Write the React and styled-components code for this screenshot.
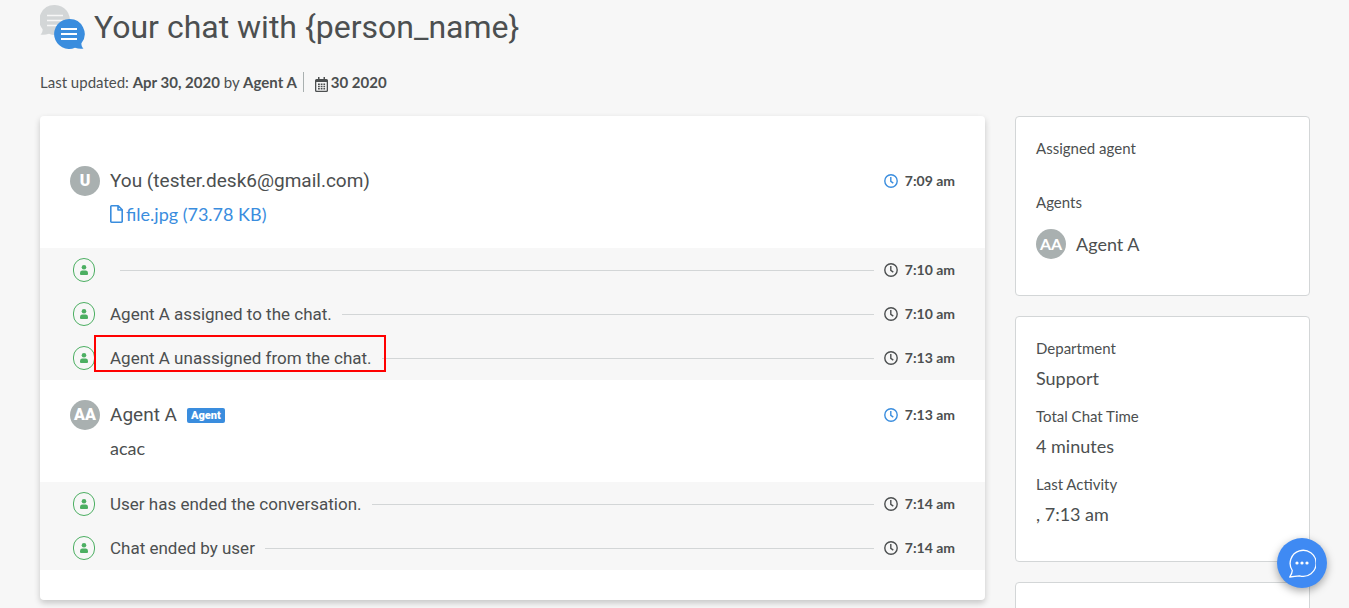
import React from "react";
import styled, { createGlobalStyle } from "styled-components";

const color = {
  page: "#f7f7f7",
  text: "#4c4f50",
  blue: "#3a8dde",
  grey: "#a9b0b0",
  line: "#d3d6d7",
  green: "#4caf62",
};
const heading = `Roboto, "Liberation Sans", sans-serif`;

const GlobalStyle = createGlobalStyle`
  *, *::before, *::after { box-sizing: border-box; }
  body {
    margin: 0;
    background: ${color.page};
    color: ${color.text};
    font-family: Lato, "Liberation Sans", sans-serif;
    font-size: 15px;
    line-height: 24px;
  }
  svg { display: block; flex: none; }
`;

const Page = styled.div`
  padding: 4px 39px 0 40px;
`;
const TitleRow = styled.header`
  display: flex;
  align-items: center;
  gap: 9px;
  height: 46px;
`;
const Title = styled.h1`
  margin: 0;
  font: 400 32px/40px ${heading};
`;
const Meta = styled.div`
  display: flex;
  align-items: center;
  height: 20px;
  margin: 22px 0 24px;
  line-height: 20px;
  white-space: pre-wrap;
`;
const MetaDate = styled.span`
  display: flex;
  align-items: flex-end;
  gap: 3px;
  margin-left: 6px;
  padding-left: 11px;
  border-left: 1px solid ${color.grey};
  font-weight: 700;
`;
const Columns = styled.div`
  display: grid;
  grid-template-columns: minmax(0, 1fr) 295px;
  gap: 30px;
  align-items: start;
`;
const Conversation = styled.main`
  padding: 30px 0;
  background: #fff;
  border-radius: 4px;
  box-shadow: 0 3px 6px rgba(0, 0, 0, 0.2);
`;
const MessageBox = styled.article`
  padding: 20px 30px 22px;
`;
const MessageHead = styled.div`
  display: flex;
  align-items: center;
  gap: 10px;
`;
const Author = styled.h2`
  margin: 0;
  font: 400 19px/30px ${heading};
`;
const Badge = styled.span`
  padding: 0 4px;
  border-radius: 2px;
  background: ${color.blue};
  color: #fff;
  font: 900 11px/15px ${heading};
`;
const MessageBody = styled.div`
  display: flex;
  margin: 6px 0 0 40px;
  font-size: 18px;
`;
const FileLink = styled.a`
  display: flex;
  align-items: center;
  gap: 3px;
  color: ${color.blue};
  text-decoration: none;
`;
const Avatar = styled.span`
  flex: none;
  width: 30px;
  height: 30px;
  border-radius: 50%;
  background: ${color.grey};
  color: #fff;
  font: ${(p) => (p.$heavy ? 900 : 700)} 16px/30px ${(p) => (p.$heavy ? heading : "Lato, sans-serif")};
  text-align: center;
`;
const TimeBox = styled.time`
  display: flex;
  align-items: center;
  gap: 7px;
  margin-left: auto;
  color: ${color.text};
  font-size: 14px;
  font-weight: 700;
  svg { color: ${(p) => (p.$accent ? color.blue : color.text)}; }
`;
const Events = styled.ul`
  margin: 0;
  padding: 0 30px;
  background: ${color.page};
  list-style: none;
`;
const EventRow = styled.li`
  display: flex;
  align-items: center;
  gap: 10px;
  height: 44px;
`;
const PersonRing = styled.span`
  display: grid;
  place-items: center;
  flex: none;
  width: 22px;
  height: 24px;
  margin: 0 5px 0 3px;
  border: 1px solid ${color.green};
  border-radius: 11px;
  color: ${color.green};
`;
const EventText = styled.span`
  position: relative;
  font: 400 17px/24px ${heading};
`;
const Highlight = styled.span`
  position: absolute;
  inset: -11px -14px -2px -16px;
  border: 2px solid #f00;
`;
const Rule = styled.span`
  flex: 1;
  height: 1px;
  background: ${color.line};
`;
const Side = styled.aside`
  display: grid;
  gap: 20px;
`;
const Panel = styled.section`
  min-height: ${(p) => p.$min || 0}px;
  padding: 19px 20px 21px;
  background: #fff;
  border: 1px solid ${color.line};
  border-radius: 4px;
`;
const Facts = styled.dl`
  margin: 0;
`;
const Label = styled.dt`
  margin: 0;
`;
const Value = styled.dd`
  display: flex;
  align-items: center;
  gap: 10px;
  min-height: 10px;
  margin: ${(p) => (p.$roomy ? "15px 0" : "6px 0 14px")};
  font-size: 18px;
`;
const ChatButton = styled.button`
  position: fixed;
  right: 22px;
  bottom: 20px;
  display: grid;
  place-items: center;
  width: 50px;
  height: 50px;
  padding: 0;
  border: 0;
  border-radius: 50%;
  background: #3f8af3;
  color: #fff;
  box-shadow: 0 3px 8px rgba(0, 0, 0, 0.35);
`;

const ChatLogo = () => (
  <svg width="45" height="46" viewBox="0 0 45 46" aria-hidden="true">
    <path fill="#d3d6d7" d="M15 1a15 15 0 1 1-6 28.800c-3 1-6 1.400-8.500.7 1.700-1.400 2.200-3 2.100-5.200A15 15 0 0 1 15 1z" />
    <path stroke="#f7f7f7" strokeWidth="1.600" d="M7 11.500h16M7 16.500h16M7 21.500h16" />
    <path fill="#3a8dde" d="M29 15a15 15 0 1 0 6 28.800c3 1 6 1.400 8.500.7-1.700-1.400-2.200-3-2.100-5.200A15 15 0 0 0 29 15z" />
    <path stroke="#fff" strokeWidth="1.800" d="M21 25h16M21 30h16M21 35h16" />
  </svg>
);
const CalendarIcon = () => (
  <svg width="13" height="15" viewBox="0 0 13 15" aria-hidden="true">
    <path fill="currentColor" fillRule="evenodd" d="M3 0h1.500v2h4V0H10v2h1.500A1.500 1.500 0 0 1 13 3.500v10a1.500 1.500 0 0 1-1.500 1.500h-10A1.500 1.500 0 0 1 0 13.500v-10A1.500 1.500 0 0 1 1.500 2H3zM1.300 5v8.200q0 .5.500.5h9.400q.5 0 .5-.5V5z" />
    <path stroke="currentColor" strokeWidth="1.500" strokeDasharray="1.800 .9" d="M3 7.300h7.100M3 9.500h7.100M3 11.700h7.100" />
  </svg>
);
const FileIcon = () => (
  <svg width="13" height="18" viewBox="0 0 13 18" fill="none" stroke="currentColor" strokeWidth="1.600" strokeLinejoin="round" aria-hidden="true">
    <path d="M1.500.8h6.700l4 4v11.700a.7.7 0 0 1-.7.7h-10a.7.7 0 0 1-.7-.7v-15a.7.7 0 0 1 .7-.7zM8 .8V5h4.200" />
  </svg>
);
const ClockIcon = () => (
  <svg width="14" height="14" viewBox="0 0 14 14" fill="none" stroke="currentColor" strokeWidth="1.400" aria-hidden="true">
    <circle cx="7" cy="7" r="6.200" />
    <path d="M6.800 3v4.300l2.500 1.800" />
  </svg>
);
const PersonIcon = () => (
  <svg width="8" height="10" viewBox="0 0 8 10" fill="currentColor" aria-hidden="true">
    <circle cx="4" cy="2.300" r="2.300" />
    <path d="M2 5.500h4q2 0 2 2.500v1q0 1-1 1H1q-1 0-1-1V8q0-2.500 2-2.500z" />
  </svg>
);
const BubbleIcon = () => (
  <svg width="28" height="29" viewBox="0 0 28 29" fill="none" stroke="currentColor" strokeWidth="1.300" strokeLinejoin="round" aria-hidden="true">
    <path d="M4.300 21.500A13 13 0 1 1 11.500 26.800q-4.500.2-9.800 1.200 2.500-3.600 2.600-6.500z" />
    <g fill="currentColor" stroke="none">
      <circle cx="9" cy="14" r="1.600" />
      <circle cx="14" cy="14" r="1.600" />
      <circle cx="19" cy="14" r="1.600" />
    </g>
  </svg>
);

const Time = ({ children, accent }) => (
  <TimeBox $accent={accent}>
    <ClockIcon />
    {children}
  </TimeBox>
);

const Message = ({ initials, author, badge, time, children }) => (
  <MessageBox>
    <MessageHead>
      <Avatar $heavy>{initials}</Avatar>
      <Author>{author}</Author>
      {badge && <Badge>{badge}</Badge>}
      <Time accent>{time}</Time>
    </MessageHead>
    <MessageBody>{children}</MessageBody>
  </MessageBox>
);

const Event = ({ text, time, highlighted }) => (
  <EventRow>
    <PersonRing><PersonIcon /></PersonRing>
    <EventText>
      {text}
      {highlighted && <Highlight />}
    </EventText>
    <Rule />
    <Time>{time}</Time>
  </EventRow>
);

export default function App() {
  return (
    <>
      <GlobalStyle />
      <Page>
        <TitleRow>
          <ChatLogo />
          <Title>{"Your chat with {person_name}"}</Title>
        </TitleRow>
        <Meta>
          <span>Last updated: <b>Apr 30, 2020</b> by <b>Agent A</b></span>
          <MetaDate><CalendarIcon />30 2020</MetaDate>
        </Meta>
        <Columns>
          <Conversation>
            <Message initials="U" author="You (tester.desk6@gmail.com)" time="7:09 am">
              <FileLink href="#file"><FileIcon />file.jpg (73.78 KB)</FileLink>
            </Message>
            <Events>
              <Event text="" time="7:10 am" />
              <Event text="Agent A assigned to the chat." time="7:10 am" />
              <Event text="Agent A unassigned from the chat." time="7:13 am" highlighted />
            </Events>
            <Message initials="AA" author="Agent A" badge="Agent" time="7:13 am">acac</Message>
            <Events>
              <Event text="User has ended the conversation." time="7:14 am" />
              <Event text="Chat ended by user" time="7:14 am" />
            </Events>
          </Conversation>
          <Side>
            <Panel>
              <Facts>
                <Label>Assigned agent</Label>
                <Value />
                <Label>Agents</Label>
                <Value $roomy><Avatar>AA</Avatar>Agent A</Value>
              </Facts>
            </Panel>
            <Panel>
              <Facts>
                <Label>Department</Label>
                <Value>Support</Value>
                <Label>Total Chat Time</Label>
                <Value>4 minutes</Value>
                <Label>Last Activity</Label>
                <Value>, 7:13 am</Value>
              </Facts>
            </Panel>
            <Panel $min={180} />
          </Side>
        </Columns>
      </Page>
      <ChatButton type="button" aria-label="Open chat"><BubbleIcon /></ChatButton>
    </>
  );
}
